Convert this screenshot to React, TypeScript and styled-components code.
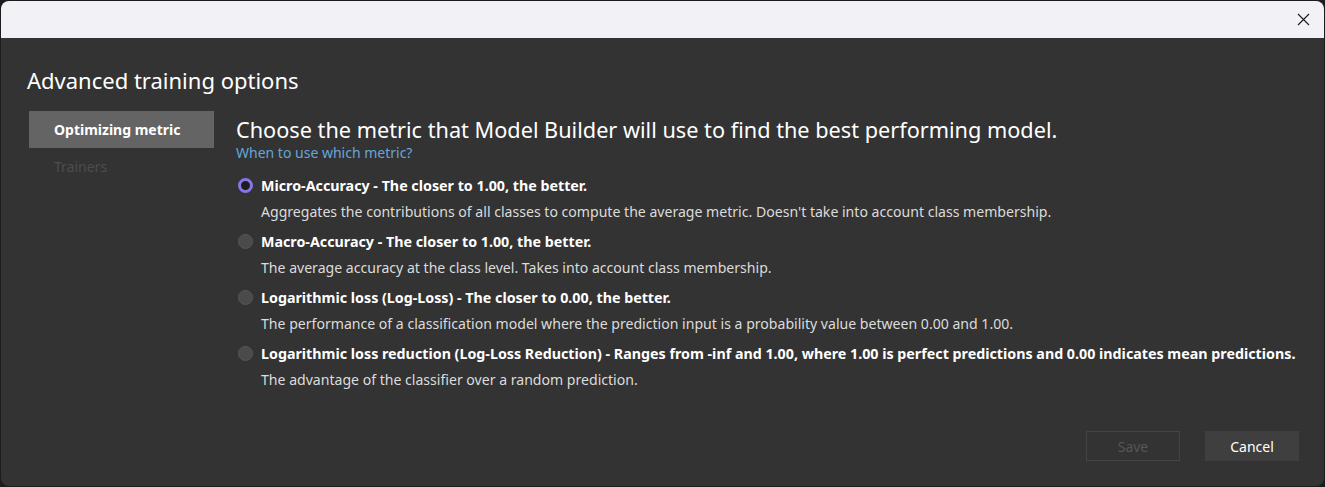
import React, { useState } from 'react';
import styled, { createGlobalStyle } from 'styled-components';

const GlobalStyle = createGlobalStyle`
  html, body {
    margin: 0;
    padding: 0;
    background: #1c1c1c;
    font-family: "Noto Sans", "Open Sans", sans-serif;
  }
  * {
    box-sizing: border-box;
  }
`;

const Window = styled.div`
  display: flex;
  flex-direction: column;
  width: 1323px;
  height: 485px;
  margin: 1px 0 0 1px;
  border-radius: 8px;
  overflow: hidden;
  background: #333333;
`;

const TitleBar = styled.div`
  display: flex;
  justify-content: flex-end;
  align-items: center;
  height: 37px;
  background: #f2f2f6;
  padding-right: 6px;
`;

const CloseButton = styled.button`
  display: flex;
  align-items: center;
  justify-content: center;
  width: 30px;
  height: 30px;
  border: none;
  background: transparent;
  padding: 0;
  cursor: pointer;
`;

const Body = styled.div`
  flex: 1;
  display: flex;
  flex-direction: column;
  padding: 29px 25px 25px 26px;
`;

const DialogTitle = styled.h1`
  margin: 0 0 18px;
  font-size: 22px;
  font-weight: 400;
  color: #ffffff;
  line-height: 26px;
`;

const Columns = styled.div`
  flex: 1;
  display: flex;
  gap: 22px;
`;

const Nav = styled.div`
  display: flex;
  flex-direction: column;
  width: 187px;
  padding-left: 2px;
`;

const NavItem = styled.div<{ $active?: boolean }>`
  height: 37px;
  display: flex;
  align-items: center;
  padding-left: 25px;
  font-size: 14px;
  font-weight: ${(p) => (p.$active ? 700 : 400)};
  color: ${(p) => (p.$active ? '#ffffff' : '#4d4d4d')};
  background: ${(p) => (p.$active ? '#646464' : 'transparent')};
`;

const Main = styled.div`
  flex: 1;
  display: flex;
  flex-direction: column;
`;

const Heading = styled.h2`
  margin: 6px 0 0;
  font-size: 21.7px;
  font-weight: 400;
  color: #ffffff;
  line-height: 26px;
`;

const HelpLink = styled.a`
  font-size: 14px;
  color: #64a6dc;
  text-decoration: none;
  line-height: 19px;
  margin-bottom: 14px;
`;

const Options = styled.div`
  display: flex;
  flex-direction: column;
  gap: 11px;
`;

const Option = styled.label`
  display: flex;
  flex-direction: column;
  gap: 8px;
  cursor: pointer;
`;

const OptionHead = styled.div`
  display: flex;
  align-items: center;
  gap: 8px;
  height: 18px;
`;

const Radio = styled.span<{ $checked?: boolean }>`
  width: 15px;
  height: 15px;
  border-radius: 50%;
  flex-shrink: 0;
  margin-left: 2px;
  background: ${(p) => (p.$checked ? '#1e1e1e' : '#4a4a4a')};
  border: ${(p) => (p.$checked ? '3.5px solid #8676e6' : '1px solid #575757')};
`;

const OptionTitle = styled.span`
  font-size: 14.28px;
  font-weight: 700;
  color: #ffffff;
`;

const OptionDesc = styled.div`
  padding-left: 25px;
  font-size: 14.08px;
  color: #dcdcdc;
  line-height: 19px;
`;

const Footer = styled.div`
  display: flex;
  justify-content: flex-end;
  gap: 25px;
`;

const FooterButton = styled.button<{ $disabled?: boolean }>`
  width: 94px;
  height: 30px;
  font-family: inherit;
  font-size: 14px;
  border: 1px solid ${(p) => (p.$disabled ? '#444444' : '#3f3f3f')};
  background: ${(p) => (p.$disabled ? 'transparent' : '#3f3f3f')};
  color: ${(p) => (p.$disabled ? '#565656' : '#ffffff')};
  cursor: ${(p) => (p.$disabled ? 'default' : 'pointer')};
`;

const metrics = [
  {
    title: 'Micro-Accuracy - The closer to 1.00, the better.',
    desc: "Aggregates the contributions of all classes to compute the average metric. Doesn't take into account class membership.",
  },
  {
    title: 'Macro-Accuracy - The closer to 1.00, the better.',
    desc: 'The average accuracy at the class level. Takes into account class membership.',
  },
  {
    title: 'Logarithmic loss (Log-Loss) - The closer to 0.00, the better.',
    desc: 'The performance of a classification model where the prediction input is a probability value between 0.00 and 1.00.',
  },
  {
    title:
      'Logarithmic loss reduction (Log-Loss Reduction) - Ranges from -inf and 1.00, where 1.00 is perfect predictions and 0.00 indicates mean predictions.',
    desc: 'The advantage of the classifier over a random prediction.',
  },
];

const App: React.FC = () => {
  const [selected, setSelected] = useState(0);

  return (
    <>
      <GlobalStyle />
      <Window>
        <TitleBar>
          <CloseButton aria-label="Close">
            <svg width="13" height="13" viewBox="0 0 13 13">
              <path d="M1 1L12 12M12 1L1 12" stroke="#1a1a1a" strokeWidth="1.1" />
            </svg>
          </CloseButton>
        </TitleBar>
        <Body>
          <DialogTitle>Advanced training options</DialogTitle>
          <Columns>
            <Nav>
              <NavItem $active>Optimizing metric</NavItem>
              <NavItem>Trainers</NavItem>
            </Nav>
            <Main>
              <Heading>Choose the metric that Model Builder will use to find the best performing model.</Heading>
              <HelpLink href="#">When to use which metric?</HelpLink>
              <Options>
                {metrics.map((m, i) => (
                  <Option key={m.title} onClick={() => setSelected(i)}>
                    <OptionHead>
                      <Radio $checked={selected === i} />
                      <OptionTitle>{m.title}</OptionTitle>
                    </OptionHead>
                    <OptionDesc>{m.desc}</OptionDesc>
                  </Option>
                ))}
              </Options>
            </Main>
          </Columns>
          <Footer>
            <FooterButton $disabled disabled>
              Save
            </FooterButton>
            <FooterButton>Cancel</FooterButton>
          </Footer>
        </Body>
      </Window>
    </>
  );
};

export default App;
